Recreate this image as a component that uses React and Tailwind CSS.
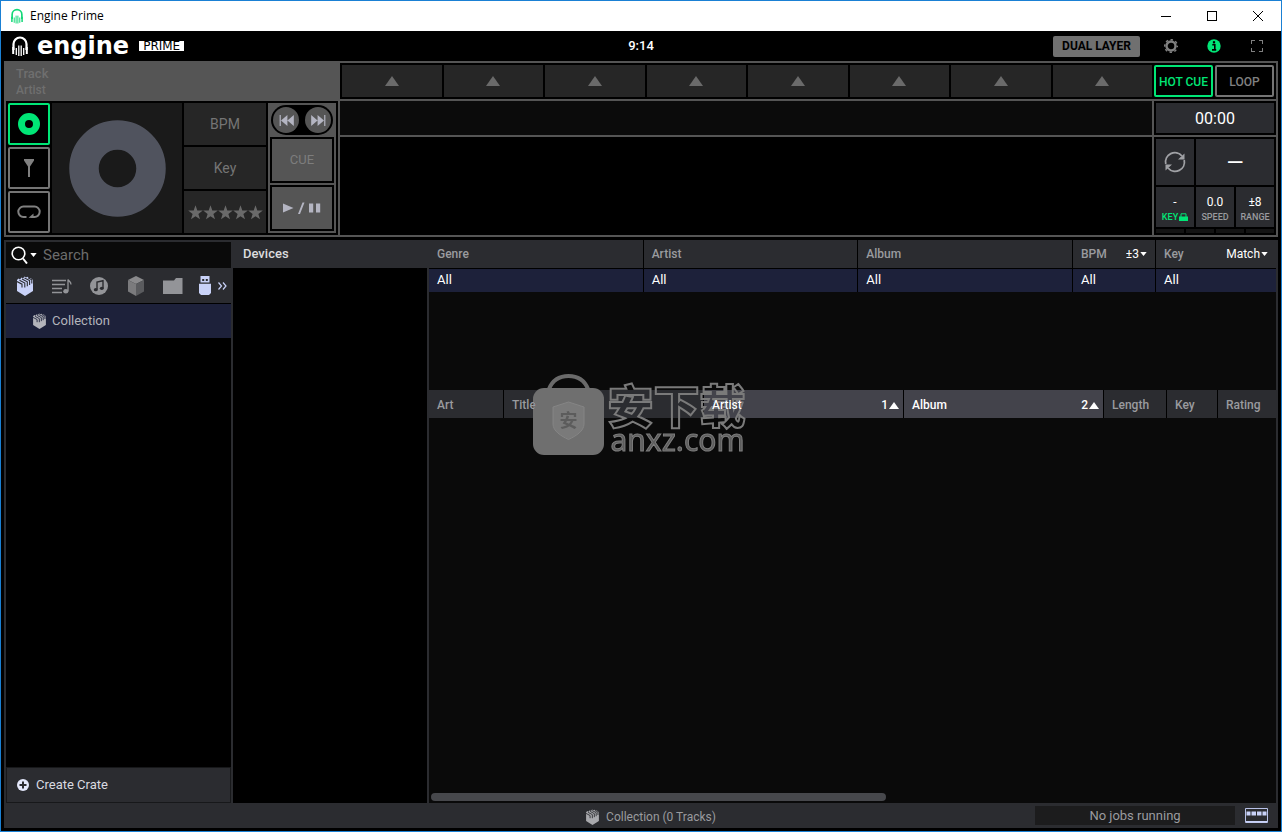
import { clsx } from 'clsx';

const pads = [1, 2, 3, 4, 5, 6, 7, 8];
const stars = [1, 2, 3, 4, 5];

function HeadphoneLogo({ className }) {
  return (
    <svg viewBox="0 0 16 20" className={className} fill="none" stroke="currentColor">
      <path d="M1.5 14V8a6.5 6.5 0 0 1 13 0V14" strokeWidth="2.2" />
      <path d="M1.2 11v7M14.8 11v7" strokeWidth="2" />
      <path d="M4.3 12v7M6.8 9.5V20M9.2 9.5V20M11.7 12v7" strokeWidth="1.3" />
    </svg>
  );
}

function CrateIcon({ className, gap = '#2b2c30' }) {
  return (
    <svg viewBox="0 0 16 20" className={className}>
      <path d="M0 4 1.5 2.5 3 3.5 4.5 1.5 6 2.5 7.5 .5 9 1.5 10.5 .8 12 2 13.5 2 16 4V15L8 20 0 15Z" fill="currentColor" />
      <path
        d="M0 5.5 5 8.2V11.5M2.5 4.2 7.8 7V11.5M5 3 10.3 5.8V10.2M7.5 2 12.6 4.5V9M11 1.8 14.8 3.8V7.5"
        fill="none"
        stroke={gap}
        strokeWidth="1.1"
      />
    </svg>
  );
}

function Caret() {
  return (
    <svg viewBox="0 0 8 5" className="w-[7px] h-[4px] shrink-0 text-white">
      <path d="M0 0h8L4 5Z" fill="currentColor" />
    </svg>
  );
}

function SortArrow() {
  return (
    <svg viewBox="0 0 10 7" className="w-[10px] h-[7px]">
      <path d="M5 0 10 7H0Z" fill="currentColor" />
    </svg>
  );
}

function TitleBar() {
  return (
    <div className="flex items-center justify-between h-[30px] bg-white text-black">
      <div className="flex items-center gap-[7px] pl-[10px]">
        <HeadphoneLogo className="w-[12px] h-[16px] text-[#12d877]" />
        <span className="font-['Open_Sans',sans-serif] text-[12px]">Engine Prime</span>
      </div>
      <div className="flex h-full">
        <button aria-label="Minimize" className="w-[46px] flex items-center justify-center">
          <svg viewBox="0 0 10 10" className="size-[10px]" stroke="currentColor" shapeRendering="crispEdges">
            <path d="M0 5.5h10" />
          </svg>
        </button>
        <button aria-label="Maximize" className="w-[46px] flex items-center justify-center">
          <svg viewBox="0 0 10 10" className="size-[10px]" stroke="currentColor" fill="none" shapeRendering="crispEdges">
            <path d="M.5.5h9v9h-9Z" />
          </svg>
        </button>
        <button aria-label="Close" className="w-[46px] flex items-center justify-center">
          <svg viewBox="0 0 10 10" className="size-[10px]" stroke="currentColor">
            <path d="M0 0l10 10M10 0 0 10" />
          </svg>
        </button>
      </div>
    </div>
  );
}

function Header() {
  return (
    <header className="grid grid-cols-[1fr_auto_1fr] items-center h-[30px]">
      <div className="flex items-center pl-[11px] text-white">
        <HeadphoneLogo className="w-[16px] h-[20px] mr-[9px]" />
        <span className="font-['DejaVu_Sans',sans-serif] font-bold text-[24px] leading-[24px]">engine</span>
        <span className="ml-[10px] px-[4px] h-[10px] bg-white text-black font-['DejaVu_Sans',sans-serif] text-[12px] leading-[10px]">
          PRIME
        </span>
      </div>
      <span className="text-white text-[13px] font-medium">9:14</span>
      <div className="flex items-center justify-end pr-[3px]">
        <button className="h-[21px] px-[9px] mr-[9px] rounded-[2px] bg-[#707070] text-black text-[12px] font-bold leading-[21px]">
          DUAL LAYER
        </button>
        <button aria-label="Settings" className="w-[43px] flex justify-center">
          <svg viewBox="0 0 14 14" className="size-[14px]" fill="none" stroke="#808080">
            <circle cx="7" cy="7" r="4.5" strokeWidth="2.4" />
            <circle cx="7" cy="7" r="6.3" strokeWidth="1.5" strokeDasharray="2.47 2.47" strokeDashoffset="1.2" />
          </svg>
        </button>
        <button aria-label="Info" className="w-[43px] flex justify-center">
          <svg viewBox="0 0 14 14" className="size-[14px]">
            <circle cx="7" cy="7" r="6.7" fill="#00e676" />
            <path d="M5.3 5.8h2.5v5M5 10.9h4.2" stroke="#000" strokeWidth="1.6" fill="none" />
            <rect x="5.9" y="2.2" width="2.2" height="2.2" />
          </svg>
        </button>
        <button aria-label="Full screen" className="w-[43px] flex justify-center text-[#808080]">
          <svg viewBox="0 0 12 12" className="size-[12px]" fill="none" stroke="currentColor" shapeRendering="crispEdges">
            <path d="M.5 4V.5H4M8 .5h3.5V4M11.5 8v3.5H8M4 11.5H.5V8" />
          </svg>
        </button>
      </div>
    </header>
  );
}

function DeckInfo() {
  return (
    <div className="w-[332px] shrink-0 flex flex-col">
      <div className="h-[38px] pl-[10px] pt-[3px] text-[#6f6f6f] text-[12px] leading-[16px] font-medium">
        <div className="text-[13px]">Track</div>
        <div>Artist</div>
      </div>
      <div className="h-[134px] bg-black p-[2px] flex gap-[2px]">
        <div className="w-[42px] flex flex-col gap-[2px]">
          <button aria-label="Platter" className="flex-1 flex items-center justify-center border-2 border-[#00e676] rounded-[2px]">
            <svg viewBox="0 0 22 22" className="size-[22px]">
              <circle cx="11" cy="11" r="7.5" fill="none" stroke="#00e676" strokeWidth="7" />
            </svg>
          </button>
          <button aria-label="Filter" className="flex-1 flex items-center justify-center border-2 border-[#747474] rounded-[2px]">
            <svg viewBox="0 0 10 18" className="w-[10px] h-[18px]" fill="#808080">
              <path d="M0 0h10v1.5L6 7.5V18H4V7.5L0 1.5Z" />
            </svg>
          </button>
          <button aria-label="Loop" className="flex-1 flex items-center justify-center border-2 border-[#747474] rounded-[2px]">
            <svg viewBox="0 0 24 14" className="w-[24px] h-[14px]" fill="none" stroke="#808080" strokeWidth="2">
              <path d="M9.5 12H6.5a5.2 5.2 0 0 1 0-10.4h11a5.2 5.2 0 0 1 0 10.4H14" />
              <path d="M11.5 12.8 16.5 8.5V13Z" fill="#808080" stroke="none" />
            </svg>
          </button>
        </div>
        <div className="w-[130px] bg-[#1a1a1a] flex items-center justify-center">
          <svg viewBox="0 0 98 98" className="size-[98px]">
            <circle cx="49.5" cy="49.5" r="33.5" fill="none" stroke="#50535e" strokeWidth="29.5" />
          </svg>
        </div>
        <div className="w-[82px] flex flex-col gap-[2px] text-[#757575] text-[14px]">
          <div className="flex-1 bg-[#262626] flex items-center justify-center">BPM</div>
          <div className="flex-1 bg-[#262626] flex items-center justify-center">Key</div>
          <div className="flex-1 bg-[#262626] flex items-center justify-center">
            {stars.map((s) => (
              <svg key={s} viewBox="0 0 14 14" className="size-[15px]" fill="#6a6a6a">
                <path d="M7 .3 8.7 5.2H13.8L9.7 8.3 11.2 13.4 7 10.4 2.8 13.4 4.3 8.3.2 5.2H5.3Z" />
              </svg>
            ))}
          </div>
        </div>
        <div className="w-[68px] bg-[#555] p-[2px] flex flex-col gap-[2px]">
          <div className="h-[30px] mx-[1px] rounded-full bg-black flex items-center justify-between px-[2px]">
            <button aria-label="Previous" className="size-[26px] rounded-full bg-[#555] flex items-center justify-center">
              <svg viewBox="0 0 16 12" className="w-[15px] h-[11px]" fill="#b4b5c2">
                <path d="M.5 0h1.3v12H.5ZM9 0v12L2 6ZM16 0v12L9 6Z" />
              </svg>
            </button>
            <button aria-label="Next" className="size-[26px] rounded-full bg-[#555] flex items-center justify-center">
              <svg viewBox="0 0 16 12" className="w-[15px] h-[11px]" fill="#b4b5c2">
                <path d="M14.2 0h1.3v12h-1.3ZM7 0v12l7-6ZM0 0v12l7-6Z" />
              </svg>
            </button>
          </div>
          <button className="h-[46px] border-2 border-black text-[#7d7d7d] text-[13px]">CUE</button>
          <button aria-label="Play / pause" className="h-[46px] border-2 border-black flex items-center justify-center">
            <svg viewBox="0 0 38 12" className="w-[38px] h-[12px]" fill="#b4b5c2">
              <path d="M0 1.5 10.5 6 0 10.5ZM19.5.5H21.5L17 12H15ZM26 1.5h4.2v9H26ZM33 1.5h4.2v9H33Z" />
            </svg>
          </button>
        </div>
      </div>
    </div>
  );
}

function DeckControls() {
  return (
    <div className="w-[122px] shrink-0 flex flex-col gap-[2px]">
      <div className="h-[34px] bg-black p-[2px]">
        <div className="h-full pt-[2px] bg-[#2b2c30] flex items-center justify-center text-white text-[16px]">00:00</div>
      </div>
      <div className="h-[98px] bg-black p-[2px] flex flex-col gap-[2px] text-white">
        <div className="h-[46px] flex gap-[2px]">
          <button aria-label="Sync" className="w-[38px] bg-[#2b2c30] flex items-center justify-center">
            <svg viewBox="0 0 22 22" className="size-[22px]" fill="none" stroke="#a0a1a5" strokeWidth="1.8">
              <path d="M1.8 13A9.3 9.3 0 0 1 18 5M20.2 9A9.3 9.3 0 0 1 4 17" />
              <path d="M20.5 2.5v6h-6.5ZM1.5 19.5v-6H8Z" fill="#a0a1a5" stroke="none" />
            </svg>
          </button>
          <div className="flex-1 bg-[#2b2c30] flex items-center justify-center text-[22px]">—</div>
        </div>
        <div className="h-[40px] flex gap-[2px] text-[12px] leading-[16px] text-center">
          <button className="flex-1 pt-[4px] bg-[#2b2c30]">
            <div>-</div>
            <div className="flex items-center justify-center gap-[1px] text-[9px] font-medium text-[#00e676] leading-[14px]">
              KEY
              <svg viewBox="0 0 9 9" className="size-[9px]" fill="#00e676">
                <path d="M0 3.5h9V8H0Z" />
                <path d="M2 4V.8h5V4" fill="none" stroke="#00e676" />
              </svg>
            </div>
          </button>
          <button className="flex-1 pt-[4px] bg-[#2b2c30]">
            <div>0.0</div>
            <div className="text-[9px] font-medium text-[#9a9b9f] leading-[14px]">SPEED</div>
          </button>
          <button className="flex-1 pt-[4px] bg-[#2b2c30]">
            <div>±8</div>
            <div className="text-[9px] font-medium text-[#9a9b9f] leading-[14px]">RANGE</div>
          </button>
        </div>
        <div className="h-[4px] flex gap-[2px]">
          <div className="flex-1 bg-[#141414]" />
          <div className="flex-1 bg-[#141414]" />
          <div className="flex-1 bg-[#141414]" />
          <div className="flex-1 bg-[#141414]" />
        </div>
      </div>
    </div>
  );
}

function Deck() {
  return (
    <section className="bg-[#555] p-[2px] flex gap-[2px]">
      <DeckInfo />
      <div className="flex-1 min-w-0 flex flex-col gap-[2px]">
        <div className="h-[36px] bg-black p-[2px] flex gap-[2px]">
          {pads.map((p) => (
            <button key={p} aria-label={`Hot cue ${p}`} className="flex-1 bg-[#262626] flex items-center justify-center">
              <svg viewBox="0 0 14 10" className="w-[14px] h-[10px]" fill="#6a6a6a">
                <path d="M7 0 14 10H0Z" />
              </svg>
            </button>
          ))}
          <button className="w-[59px] pt-[2px] border-2 border-[#00e676] rounded-[2px] text-[#00e676] text-[12px] font-medium whitespace-nowrap">
            HOT CUE
          </button>
          <button className="w-[59px] pt-[2px] border-2 border-[#747474] rounded-[2px] text-[#808080] text-[12px] font-medium">
            LOOP
          </button>
        </div>
        <div className="flex gap-[2px]">
          <div className="flex-1 flex flex-col gap-[2px]">
            <div className="h-[34px] bg-[#0b0b0b]" />
            <div className="flex-1 bg-black" />
          </div>
          <DeckControls />
        </div>
      </div>
    </section>
  );
}

function Sidebar() {
  return (
    <aside className="w-[225px] shrink-0 flex flex-col pt-[2px] bg-[#2b2c30]">
      <div className="h-[26px] bg-[#0a0a0a] flex items-center pl-[5px]">
        <svg viewBox="0 0 18 18" className="size-[18px] text-white" fill="none" stroke="currentColor">
          <circle cx="7.5" cy="7.5" r="6.3" strokeWidth="1.6" />
          <path d="m12 12.5 4 5" strokeWidth="2" />
        </svg>
        <span className="ml-[1px]">
          <Caret />
        </span>
        <input
          aria-label="Search"
          placeholder="Search"
          className="flex-1 min-w-0 ml-[6px] bg-transparent outline-none text-[15px] text-white placeholder:text-[#6c6c6c]"
        />
      </div>
      <div className="h-[35px] flex items-center text-[#939498]">
        <button aria-label="Collection" className="w-[37px] flex justify-center text-[#c9d2f8]">
          <CrateIcon className="w-[16px] h-[20px]" />
        </button>
        <button aria-label="Playlists" className="w-[37px] flex justify-center">
          <svg viewBox="0 0 20 16" className="w-[20px] h-[16px]" fill="none" stroke="currentColor" strokeWidth="1.3">
            <path d="M0 2.5h14M0 6.5h13M0 10.5h10M0 14.5h10" />
            <path d="M16 13V1.5c.5 2 3 1.5 3 5" />
            <ellipse cx="13.8" cy="13.3" rx="2.6" ry="2.2" fill="currentColor" stroke="none" />
          </svg>
        </button>
        <button aria-label="iTunes" className="w-[37px] flex justify-center">
          <svg viewBox="0 0 18 18" className="size-[18px]">
            <circle cx="9" cy="9" r="9" fill="currentColor" />
            <path d="M7 12.5V5l6-1.3v7.3" fill="none" stroke="#2b2c30" strokeWidth="1.4" />
            <ellipse cx="5.8" cy="12.7" rx="2" ry="1.6" fill="#2b2c30" />
            <ellipse cx="11.8" cy="11.3" rx="2" ry="1.6" fill="#2b2c30" />
          </svg>
        </button>
        <button aria-label="Crates" className="w-[37px] flex justify-center">
          <svg viewBox="0 0 16 20" className="w-[16px] h-[20px]">
            <path d="M8 0 16 4 8 8 0 4Z" fill="#8a8a8c" />
            <path d="M0 4 8 8V20L0 15.5Z" fill="#7b7b7d" />
            <path d="M16 4 8 8V20L16 15.5Z" fill="#5a5b5e" />
          </svg>
        </button>
        <button aria-label="Files" className="w-[37px] flex justify-center">
          <svg viewBox="0 0 20 16" className="w-[20px] h-[16px]" fill="currentColor">
            <path d="M0 2.5H11L13 0h6.5V16H0Z" />
          </svg>
        </button>
        <button aria-label="Devices" className="w-[27px] flex justify-center text-[#c9d2f8]">
          <svg viewBox="0 0 12 19" className="w-[12px] h-[19px]" fill="currentColor">
            <path d="M1.5 0h9v6.5h-9Z" />
            <path d="M0 7.8h12V17l-2 2H2L0 17Z" />
            <path d="M3.2 3h2v2h-2ZM6.8 3h2v2h-2Z" fill="#2b2c30" />
          </svg>
        </button>
        <button aria-label="More" className="w-[9px] flex justify-center text-[#c9d2f8]">
          <svg viewBox="0 0 9 8" className="w-[9px] h-[8px]" fill="none" stroke="currentColor" strokeWidth="1.2">
            <path d="m.5.5 3 3.5-3 3.5M5 .5 8 4 5 7.5" />
          </svg>
        </button>
      </div>
      <div className="flex-1 bg-black pt-[1px]">
        <a href="#collection" className="h-[34px] bg-[#1d213a] flex items-center gap-[6px] pl-[27px] text-[#b3b4ba] text-[13px]">
          <CrateIcon className="w-[13px] h-[16px]" gap="#1d213a" />
          Collection
        </a>
      </div>
      <button className="h-[36px] border border-[#17181a] flex items-center gap-[7px] pl-[10px] text-[#d9dae0] text-[13px]">
        <svg viewBox="0 0 12 12" className="size-[12px]">
          <circle cx="6" cy="6" r="6" fill="#e4e8fb" />
          <path d="M6 2.5v7M2.5 6h7" stroke="#2b2c30" strokeWidth="2" />
        </svg>
        Create Crate
      </button>
    </aside>
  );
}

function FilterHead({ label, option, last }) {
  return (
    <th className={clsx('text-left font-medium px-[8px] border-b border-black', !last && 'border-r')}>
      <div className="flex items-center justify-between">
        {label}
        {option && (
          <span className="flex items-center gap-[1px]">
            <select
              aria-label={`${label} filter`}
              className="appearance-none field-sizing-content bg-transparent text-white text-[12px] font-normal"
            >
              <option>{option}</option>
            </select>
            <Caret />
          </span>
        )}
      </div>
    </th>
  );
}

function FilterTable() {
  return (
    <table className="w-full table-fixed border-separate border-spacing-0 text-[12px]">
      <colgroup>
        <col />
        <col />
        <col />
        <col className="w-[83px]" />
        <col className="w-[120px]" />
      </colgroup>
      <thead>
        <tr className="h-[29px] bg-[#2b2c30] text-[#9a9b9f]">
          <FilterHead label="Genre" />
          <FilterHead label="Artist" />
          <FilterHead label="Album" />
          <FilterHead label="BPM" option="±3" />
          <FilterHead label="Key" option="Match" last />
        </tr>
      </thead>
      <tbody>
        <tr className="h-[23px] bg-[#1d213a] text-white text-[13px] leading-[22px] align-top">
          <td className="pl-[8px] border-r border-black">All</td>
          <td className="pl-[8px] border-r border-black">All</td>
          <td className="pl-[8px] border-r border-black">All</td>
          <td className="pl-[8px] border-r border-black">All</td>
          <td className="pl-[8px]">All</td>
        </tr>
      </tbody>
    </table>
  );
}

function TrackHead({ label, order, last }) {
  return (
    <th
      className={clsx(
        'text-left font-medium pl-[8px] pr-[4px] pt-[2px]',
        !last && 'border-r border-black',
        order && 'bg-[#43434b] text-white'
      )}
    >
      <div className="flex items-center justify-between">
        {label}
        {order && (
          <span className="flex items-center gap-[1px]">
            {order}
            <SortArrow />
          </span>
        )}
      </div>
    </th>
  );
}

function TrackTable() {
  return (
    <table className="w-full table-fixed border-separate border-spacing-0 text-[12px]">
      <colgroup>
        <col className="w-[75px]" />
        <col />
        <col />
        <col />
        <col className="w-[63px]" />
        <col className="w-[51px]" />
        <col className="w-[58px]" />
      </colgroup>
      <thead>
        <tr className="h-[28px] bg-[#2b2c30] text-[#9a9b9f]">
          <TrackHead label="Art" />
          <TrackHead label="Title" />
          <TrackHead label="Artist" order="1" />
          <TrackHead label="Album" order="2" />
          <TrackHead label="Length" />
          <TrackHead label="Key" />
          <TrackHead label="Rating" last />
        </tr>
      </thead>
    </table>
  );
}

function Browser() {
  return (
    <main className="flex-1 flex gap-[2px] px-[2px] bg-[#2b2c30]">
      <Sidebar />
      <div className="w-[194px] shrink-0 flex flex-col">
        <h2 className="h-[28px] pl-[10px] text-[13px] leading-[28px] font-medium text-[#dcdcde]">Devices</h2>
        <div className="flex-1 bg-black" />
      </div>
      <div className="flex-1 min-w-0 flex flex-col bg-[#0a0a0a]">
        <div className="h-[150px]">
          <FilterTable />
        </div>
        <div className="flex-1">
          <TrackTable />
        </div>
        <div className="h-[10px] px-[2px]">
          <div className="h-[8px] w-[54%] rounded-full bg-[#47484c]" />
        </div>
      </div>
    </main>
  );
}

function Footer() {
  return (
    <footer className="h-[25px] bg-[#2b2c30] grid grid-cols-[1fr_auto_1fr] items-center text-[#9a9b9f] text-[13px]">
      <div className="col-start-2 flex items-center gap-[7px] pt-[2px] pl-[20px] text-[12px]">
        <CrateIcon className="w-[13px] h-[16px] text-[#a8a9ad]" />
        Collection (0 Tracks)
      </div>
      <div className="flex items-center justify-end gap-[10px] pr-[10px]">
        <div className="w-[200px] h-[19px] bg-[#1c1c1d] leading-[20px] text-center">No jobs running</div>
        <button aria-label="Toggle view">
          <svg viewBox="0 0 23 15" className="w-[23px] h-[15px]" fill="#c9d2f8">
            <path d="M.5.5h22v14H.5Z" fill="none" stroke="#b9c2e8" />
            <path d="M1.5 3.5h4v4h-4ZM6.5 3.5h4.5v4h-4.5ZM12 3.5h4.5v4h-4.5ZM17.5 3.5h4v4h-4Z" />
            <path d="M1 13h21v1.5H1Z" />
          </svg>
        </button>
      </div>
    </footer>
  );
}

function Watermark() {
  return (
    <div className="fixed inset-0 pb-[4px] pr-[4px] pointer-events-none mix-blend-lighten flex items-center justify-center gap-[4px]">
      <svg viewBox="0 0 71 81" className="w-[71px] h-[81px]">
        <path d="M16 15C20 5 27 2 35.500 2S51 5 55 15" fill="none" stroke="#6a6a6a" strokeWidth="4" />
        <rect x="0" y="14" width="71" height="67" rx="11" fill="#6f6f6f" />
        <path d="M35.5 28 51 33V50C51 57 43 62 35.5 65.5 28 62 20 57 20 50V33Z" fill="#7a7a7a" stroke="#858585" />
        <text x="35.5" y="53" textAnchor="middle" className="font-['Noto_Sans_CJK_SC',sans-serif] font-bold text-[18px]" fill="#5c5c5c">
          安
        </text>
      </svg>
      <div className="flex flex-col pt-[8px]">
        <span className="font-['Noto_Sans_CJK_SC',sans-serif] font-black text-[46px] leading-[44px] text-transparent [-webkit-text-stroke:2px_#7a7a7a]">
          安下载
        </span>
        <span className="pl-[3px] font-['Noto_Sans',sans-serif] text-[30px] leading-[30px] text-[#5c5c5c] [-webkit-text-stroke:1px_#7d7d7d]">
          anxz.com
        </span>
      </div>
    </div>
  );
}

export default function App() {
  return (
    <div className="min-h-screen flex flex-col bg-black border border-[#1a80d4] font-[Roboto,sans-serif]">
      <TitleBar />
      <Header />
      <div className="flex-1 flex flex-col px-[3px] pb-[3px]">
        <Deck />
        <div className="h-[3px]" />
        <Browser />
        <Footer />
      </div>
      <Watermark />
    </div>
  );
}
